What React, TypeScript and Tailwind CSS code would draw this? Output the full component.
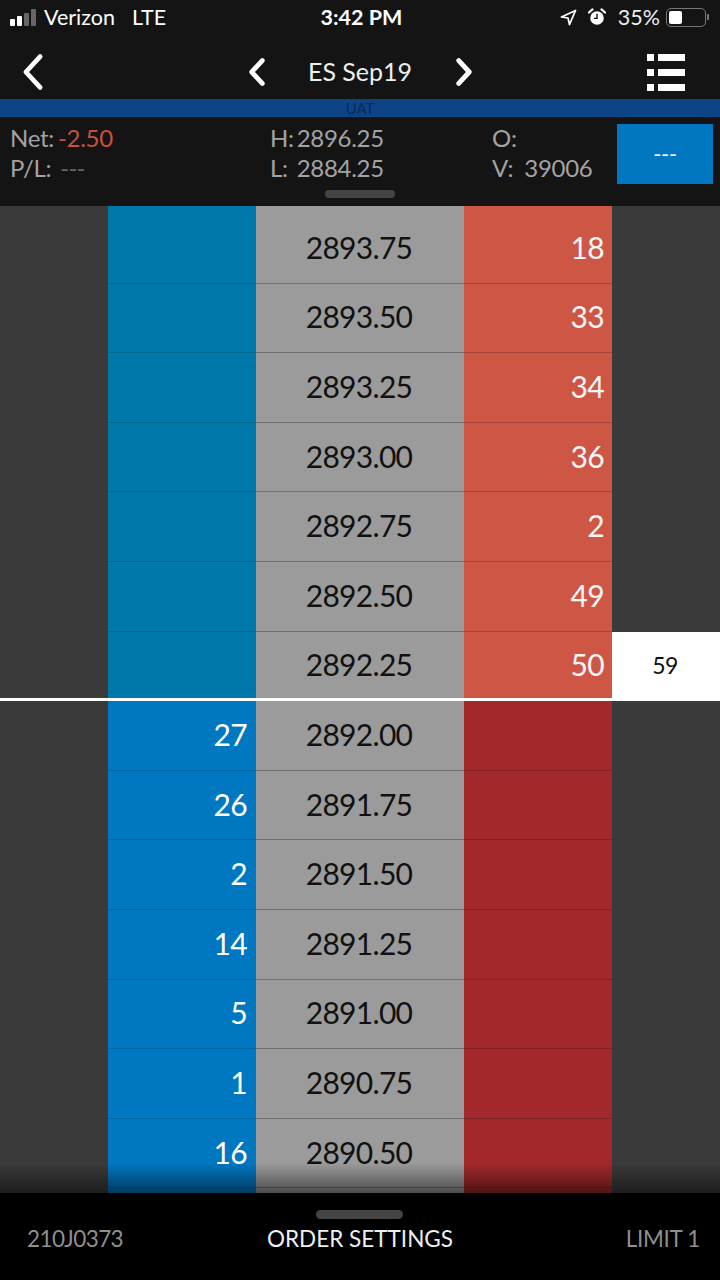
import React from 'react';

const font = { fontFamily: 'Lato, "Open Sans", sans-serif' };

interface Row {
  price?: string;
  bid?: string;
  ask?: string;
  last?: string;
}

// first and last rows are scrolled out of view, so they stay empty
const rows: Row[] = [
  {},
  { price: '2893.75', ask: '18' },
  { price: '2893.50', ask: '33' },
  { price: '2893.25', ask: '34' },
  { price: '2893.00', ask: '36' },
  { price: '2892.75', ask: '2' },
  { price: '2892.50', ask: '49' },
  { price: '2892.25', ask: '50', last: '59' },
  { price: '2892.00', bid: '27' },
  { price: '2891.75', bid: '26' },
  { price: '2891.50', bid: '2' },
  { price: '2891.25', bid: '14' },
  { price: '2891.00', bid: '5' },
  { price: '2890.75', bid: '1' },
  { price: '2890.50', bid: '16' },
  {},
];

const Chevron = ({ dir, className, weight = 4 }: { dir: 'left' | 'right'; className: string; weight?: number }) => (
  <svg viewBox="0 0 20 32" className={className} fill="none" stroke="white" strokeWidth={weight} strokeLinecap="round" strokeLinejoin="round">
    <path d={dir === 'left' ? 'M16 3 L4 16 L16 29' : 'M4 3 L16 16 L4 29'} />
  </svg>
);

const StatusBar = () => (
  <div className="h-[37px] relative flex items-center justify-between pl-[10px] pr-[11px] pb-[3px] text-[21.5px] text-white">
    <div className="flex items-center">
      <div className="flex items-end gap-[2px] h-[17px] mr-[8px]">
        <span className="w-[5px] h-[7px] rounded-[1px] bg-white" />
        <span className="w-[5px] h-[10px] rounded-[1px] bg-white" />
        <span className="w-[5px] h-[13px] rounded-[1px] bg-[#666]" />
        <span className="w-[5px] h-[17px] rounded-[1px] bg-[#666]" />
      </div>
      <span>Verizon</span>
      <span className="ml-[17px]">LTE</span>
    </div>
    <span className="absolute left-[3px] right-0 text-center font-bold text-[21.5px]">3:42 PM</span>
    <div className="flex items-center">
      <svg viewBox="0 0 18 18" className="w-[17px] h-[17px] mr-[11px]" fill="none" stroke="white" strokeWidth="1.8" strokeLinejoin="round">
        <path d="M16.5 1.5 L1.5 8.5 L8.5 9.5 L10 16.5 Z" />
      </svg>
      <svg viewBox="0 0 20 20" className="w-[18px] h-[18px] mr-[12px]">
        <circle cx="10" cy="11" r="7.5" fill="white" />
        <path d="M10 6.5 V11.5 H6.5" fill="none" stroke="#141414" strokeWidth="1.6" />
        <path d="M1 5 L5 1.5 M19 5 L15 1.5" stroke="white" strokeWidth="2.4" strokeLinecap="round" />
      </svg>
      <span className="text-[21.5px] text-[#eee]">35%</span>
      <div className="flex items-center ml-[6px]">
        <div className="w-[40px] h-[19px] rounded-[5px] border border-[#777] p-[2px]">
          <div className="w-[13px] h-full rounded-[2px] bg-white" />
        </div>
        <span className="w-[2px] h-[6px] ml-[1px] bg-[#777] rounded-r-[1px]" />
      </div>
    </div>
  </div>
);

const NavBar = () => (
  <div className="h-[62px] pt-[8px] grid grid-cols-[1fr_auto_1fr] items-center px-[21px]">
    <Chevron dir="left" className="w-[24px] h-[38px]" />
    <div className="flex items-center">
      <Chevron dir="left" className="w-[18px] h-[28px]" weight={5.5} />
      <span className="w-[189px] text-center text-[25px] text-[#eee]">ES Sep19</span>
      <Chevron dir="right" className="w-[18px] h-[28px]" weight={5.5} />
    </div>
    <div className="flex flex-col gap-[8px] justify-self-end mr-[14px]">
      {[0, 1, 2].map((i) => (
        <div key={i} className="flex gap-[4px]">
          <span className="w-[7px] h-[7px] bg-white" />
          <span className="w-[27px] h-[7px] bg-white" />
        </div>
      ))}
    </div>
  </div>
);

const StatsBar = () => (
  <div className="h-[89px] relative flex text-[24px] leading-[30px] tracking-[-0.3px] text-[#a3a3a3]">
    <div className="w-[270px] pl-[10px] pt-[6px] shrink-0">
      <div>
        Net:<span className="ml-[4px] text-[#c8513f]">-2.50</span>
      </div>
      <div>
        P/L:<span className="ml-[9px] text-[#666] tracking-[-0.8px]">---</span>
      </div>
    </div>
    <div className="w-[222px] pt-[6px] shrink-0">
      <div>H:<span className="ml-[3px]">2896.25</span></div>
      <div>L:<span className="ml-[9px]">2884.25</span></div>
    </div>
    <div className="flex-1 pt-[6px]">
      <div>O:</div>
      <div>V:<span className="ml-[11px]">39006</span></div>
    </div>
    <div className="w-[96px] h-[60px] mt-[7px] mr-[7px] bg-[#0077c0] flex items-center justify-center text-[22px] text-white">
      ---
    </div>
    <span className="absolute bottom-[8px] left-[325px] w-[70px] h-[8px] rounded-full bg-[#444]" />
  </div>
);

const Ladder = () => (
  <div className="flex-1 min-h-0 overflow-hidden bg-[#3a3a3a] relative">
    <div className="-mt-[61.6px]">
      {rows.map((r, i) => {
        const above = i < 8;
        const line = i === 0 ? 'border-b-0' : 'border-b';
        return (
          <div key={i} className="grid grid-cols-[108px_148px_208px_148px_108px] h-[69.6px] text-[30px] tracking-[-0.7px] items-stretch">
            <div />
            <div className={`flex items-center justify-end pr-[9px] pb-[2px] text-white border-[#00000022] ${line} ${above ? 'bg-[#0077a9]' : 'bg-[#0077c1]'}`}>
              {r.bid}
            </div>
            <div className={`flex items-center justify-center pr-[2px] pb-[2px] text-[#111] bg-[#9b9b9b] border-[#707070] ${line}`}>
              {r.price}
            </div>
            <div className={`flex items-center justify-end pr-[8px] pb-[2px] text-[#f6f6f6] border-[#00000033] ${line} ${above ? 'bg-[#ce5645]' : 'bg-[#a2282b]'}`}>
              {r.ask}
            </div>
            <div className={r.last ? 'flex items-center justify-center pr-[2px] pb-[2px] bg-white text-[#111] text-[23px]' : ''}>
              {r.last}
            </div>
          </div>
        );
      })}
    </div>
    {/* last price line */}
    <div className="absolute left-0 right-0 top-[492px] h-[3px] bg-white" />
    <div className="absolute left-0 right-0 bottom-0 h-[30px] bg-gradient-to-b from-transparent to-[#00000080]" />
  </div>
);

const Footer = () => (
  <div className="h-[87px] bg-black relative flex items-start justify-between pt-[29px] pl-[27px] pr-[20px] text-[22.5px] text-[#8f8f8f]">
    <span className="absolute top-[17px] left-[316px] w-[87px] h-[9px] rounded-full bg-[#444]" />
    <span className="tracking-[-0.6px]">210J0373</span>
    <span className="absolute left-0 right-0 text-center text-[#eee]">ORDER SETTINGS</span>
    <span className="tracking-[-0.3px]">LIMIT 1</span>
  </div>
);

export default function App() {
  return (
    <div className="w-[720px] h-[1280px] flex flex-col bg-[#141414] overflow-hidden" style={font}>
      <StatusBar />
      <NavBar />
      <div className="h-[18px] bg-[#0d4485] flex items-center justify-center text-[15px] text-[#0a2a5c]">UAT</div>
      <StatsBar />
      <Ladder />
      <Footer />
    </div>
  );
}
